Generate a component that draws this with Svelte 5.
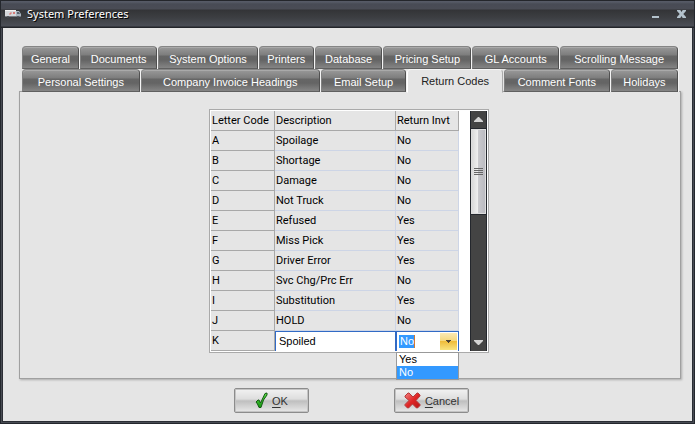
<script>
  const tabRows = [
    [
      { label: 'General', share: 57 },
      { label: 'Documents', share: 78 },
      { label: 'System Options', share: 101 },
      { label: 'Printers', share: 55 },
      { label: 'Database', share: 68 },
      { label: 'Pricing Setup', share: 89 },
      { label: 'GL Accounts', share: 88 },
      { label: 'Scrolling Message', share: 120 }
    ],
    [
      { label: 'Personal Settings', share: 119 },
      { label: 'Company Invoice Headings', share: 182 },
      { label: 'Email Setup', share: 86 },
      { label: 'Return Codes', share: 96 },
      { label: 'Comment Fonts', share: 107 },
      { label: 'Holidays', share: 67 }
    ]
  ];
  const codes = [
    ['A', 'Spoilage', 'No'],
    ['B', 'Shortage', 'No'],
    ['C', 'Damage', 'No'],
    ['D', 'Not Truck', 'No'],
    ['E', 'Refused', 'Yes'],
    ['F', 'Miss Pick', 'Yes'],
    ['G', 'Driver Error', 'Yes'],
    ['H', 'Svc Chg/Prc Err', 'No'],
    ['I', 'Substitution', 'Yes'],
    ['J', 'HOLD', 'No']
  ];
  let selected = $state('Return Codes');
  let description = $state('Spoiled');
  let returnInvt = $state('No');
</script>

<div class="window">
  <header>
    <svg class="truck" width="17" height="10" viewBox="0 0 17 10" aria-hidden="true">
      <path d="M0 1h11v6H0z" fill="#d5d7da" />
      <path d="M0 1h11v1H0z" fill="#f2f2f2" />
      <path d="M11 2h3l2 3v3h-5z" fill="#a9b4bf" />
      <path d="M12 3h2l1 2h-3z" fill="#59636f" />
      <path d="M4 5l2-2 1 1-2 2zM8 3h2v2H8z" fill="#d67a78" />
      <path d="M0 7h16v1H0z" fill="#767b82" />
      <circle cx="3" cy="8" r="1" fill="#4a4d52" />
      <circle cx="13" cy="8" r="1" fill="#4a4d52" />
    </svg>
    <h1>System Preferences</h1>
    <button class="win" aria-label="Minimize">
      <svg width="9" height="9" viewBox="0 0 9 9"><path d="M1 6h7v2H1z" fill="#b4c3cd" /></svg>
    </button>
    <button class="win" aria-label="Close">
      <svg width="9" height="8" viewBox="0 0 9 8"><path d="M0 0h3.3L4.5 2 5.7 0H9v1L6.3 4 9 7v1H5.7L4.5 6 3.3 8H0V7l2.7-3L0 1z" fill="#b4c3cd" /></svg>
    </button>
  </header>

  <main>
    <nav role="tablist">
      {#each tabRows as row}
        <div class="tabs">
          {#each row as tab}
            <button
              class="tab"
              class:active={tab.label === selected}
              role="tab"
              aria-selected={tab.label === selected}
              style:flex-grow={tab.share}
              onclick={() => (selected = tab.label)}>{tab.label}</button>
          {/each}
        </div>
      {/each}
    </nav>

    <section class="panel" role="tabpanel">
      <div class="grid">
        <table>
          <colgroup><col class="c1" /><col class="c2" /><col class="c3" /></colgroup>
          <thead>
            <tr><th>Letter Code</th><th>Description</th><th>Return Invt</th></tr>
          </thead>
          <tbody>
            {#each codes as [letter, text, ret]}
              <tr><th>{letter}</th><td>{text}</td><td>{ret}</td></tr>
            {/each}
            <tr class="editing">
              <th>K</th>
              <td><input aria-label="Description" bind:value={description} /></td>
              <td>
                <div class="combo">
                  <select aria-label="Return Invt" bind:value={returnInvt}>
                    <option>Yes</option>
                    <option>No</option>
                  </select>
                  <span class="drop" aria-hidden="true">
                    <svg width="5" height="3" viewBox="0 0 5 3"><path d="M0 0h5v1H4v1H3v1H2V2H1V1H0z" fill="#4b4236" /></svg>
                  </span>
                  <ul role="listbox" aria-label="Return Invt">
                    {#each ['Yes', 'No'] as option}
                      <li role="option" class:chosen={option === returnInvt} aria-selected={option === returnInvt}>{option}</li>
                    {/each}
                  </ul>
                </div>
              </td>
            </tr>
          </tbody>
        </table>
        <div class="scroll">
          <button aria-label="Scroll up">
            <svg width="9" height="5" viewBox="0 0 9 5"><path d="M4 0h1l4 4v1H0V4z" fill="#d4d4d4" /></svg>
          </button>
          <div class="track">
            <div class="thumb"><i></i><i></i><i></i><i></i></div>
          </div>
          <button aria-label="Scroll down">
            <svg width="9" height="5" viewBox="0 0 9 5"><path d="M0 0h9v1L5 5H4L0 1z" fill="#d4d4d4" /></svg>
          </button>
        </div>
      </div>
    </section>

    <footer>
      <button class="action">
        <svg width="13" height="17" viewBox="0 0 13 17" aria-hidden="true">
          <defs><linearGradient id="green" x2="0" y2="1"><stop stop-color="#5fe04a" /><stop offset="1" stop-color="#14960f" /></linearGradient></defs>
          <path d="M1 10l2-2h1l1.500 3L10 1.500 12 1v2L8.500 8 6 15.500H4L2.500 12z" fill="url(#green)" stroke="#135c12" />
        </svg>
        <span><u>O</u>K</span>
      </button>
      <button class="action">
        <svg width="17" height="17" viewBox="0 0 17 17" aria-hidden="true">
          <defs><linearGradient id="red" x2="1" y2="1"><stop stop-color="#f28080" /><stop offset="0.500" stop-color="#df2626" /><stop offset="1" stop-color="#b81717" /></linearGradient></defs>
          <path d="M1 4l3-3 1 0 4 4 4-4h1l2 2v1l-4 4.500 4 4v1l-2.500 2.500h-1L8.500 12l-4 4h-1L1 13.500v-1l4-4L1 5z" fill="url(#red)" stroke="#b33a3a" />
        </svg>
        <span><u>C</u>ancel</span>
      </button>
    </footer>
  </main>
</div>

<style>
  :global(body) {
    margin: 0;
  }
  * {
    box-sizing: border-box;
  }
  button,
  input,
  select {
    font: inherit;
    margin: 0;
    padding: 0;
    border: 0;
    border-radius: 0;
    outline: 0;
  }
  .window {
    min-height: 100vh;
    display: flex;
    flex-direction: column;
    padding: 0 3px 3px;
    background: #2b2e35;
    box-shadow: inset 0 0 0 1px #24272d, inset 0 0 0 2px #484b53;
    font-family: "Liberation Sans", Arial, sans-serif;
    font-size: 11px;
    color: #000;
  }
  header {
    display: flex;
    align-items: center;
    height: 28px;
    margin: 0 -2px;
    padding: 0 8px 0 4px;
    background: linear-gradient(#24262b 0 1px, #565a66 1px 2px, #484b55 4px, #4a4c55 9px, #333437 10px, #3d3f43 18px, #4b4e56 26px, #23252a 27px);
  }
  h1 {
    flex: 1;
    margin: 0 0 0 5px;
    font-family: "Noto Sans", sans-serif;
    font-size: 11px;
    font-weight: 400;
    line-height: 16px;
    color: #fff;
    text-shadow: 1px 1px 0 #000;
  }
  .win {
    display: flex;
    margin-left: 17px;
    background: none;
  }
  main {
    flex: 1;
    padding: 18px 11px 0 16px;
    background: #e5e5e5;
  }
  nav {
    padding: 0 2px 0 3px;
    position: relative;
  }
  .tabs {
    display: flex;
  }
  .tab {
    flex: 1 1 0;
    min-width: 0;
    height: 23px;
    padding-top: 2px;
    border: 1px solid #555;
    border-color: #858585 #505050 #606060 #808080;
    border-radius: 4px 4px 0 0;
    background: linear-gradient(#999 0, #7d7d7d 8px, #666 9px, #646464 13px, #858585 21px);
    box-shadow: inset 0 1px 0 #aaa, 1px 0 0 #f4f4f4;
    margin-right: 1px;
    color: #fff;
    white-space: nowrap;
  }
  .tab.active {
    height: 24px;
    margin-bottom: -1px;
    padding-top: 0;
    border-color: #f6f6f6 #aaa #e5e5e5 #fff;
    background: #e5e5e5;
    box-shadow: none;
    color: #222;
    position: relative;
  }
  .panel {
    display: flex;
    justify-content: center;
    align-items: flex-start;
    padding: 17px 2px 25px 0;
    border: 1px solid #a0a0a0;
    box-shadow: 1px 1px 2px #aaa;
    margin-top: -1px;
  }
  .grid {
    display: flex;
    padding: 1px;
    border: 1px solid #aaa;
    background: #fff;
  }
  table {
    width: 248px;
    table-layout: fixed;
    border-collapse: separate;
    border-spacing: 0;
    margin-right: 11px;
  }
  .c1 {
    width: 64px;
  }
  .c2 {
    width: 121px;
  }
  th,
  td {
    height: 20px;
    padding: 0 0 0 1px;
    border: solid #cdd5e6;
    border-width: 0 1px 1px 0;
    background: #e5e5e5;
    font-family: Roboto, sans-serif;
    font-weight: 400;
    line-height: 19px;
    text-align: left;
    white-space: nowrap;
  }
  th {
    border-color: #a8a8a8;
  }
  .editing td {
    padding: 0;
    border: 0;
  }
  input {
    display: block;
    width: 100%;
    height: 20px;
    padding: 0 3px 1px;
    border: solid #316ac5;
    border-width: 1px 1px 0;
    background: #fff;
    font-family: "Liberation Sans", Arial, sans-serif;
  }
  .combo {
    position: relative;
    height: 20px;
    font-family: "Liberation Sans", Arial, sans-serif;
  }
  select {
    display: block;
    width: 100%;
    height: 20px;
    padding: 0 0 0 3px;
    appearance: none;
    border: solid #316ac5;
    border-width: 1px 1px 0;
    background: linear-gradient(90deg, #39f 15px, #d07830 15px) 2px 3px / 16px 13px no-repeat #fff;
    color: #fff;
  }
  option {
    color: #000;
  }
  .drop {
    position: absolute;
    right: 2px;
    top: 2px;
    display: flex;
    align-items: center;
    justify-content: center;
    width: 17px;
    height: 17px;
    background: linear-gradient(#fbe9b5, #f6d87e 45%, #efbd3b 50%, #f9e47f);
    pointer-events: none;
  }
  ul {
    position: absolute;
    top: 21px;
    left: 0;
    right: 0;
    margin: 0;
    padding: 0;
    border: 1px solid #999;
    background: #fff;
    list-style: none;
    line-height: 13px;
  }
  li {
    padding-left: 2px;
  }
  .chosen {
    background: #39f;
    color: #fff;
  }
  .scroll {
    display: flex;
    flex-direction: column;
    width: 17px;
    background: #444;
    border: solid #24272d;
    border-width: 0 1px;
  }
  .scroll button {
    display: flex;
    align-items: center;
    justify-content: center;
    height: 17px;
    background: #444;
  }
  .track {
    flex: 1;
  }
  .thumb {
    display: flex;
    flex-direction: column;
    align-items: center;
    justify-content: center;
    gap: 1px;
    height: 87px;
    border: solid #24272d;
    border-width: 1px 0;
    background: linear-gradient(90deg, #d5d5d5, #efefef 45%, #c9c9cd 50%, #b9b9bf);
    box-shadow: inset 0 0 0 1px #ddd;
  }
  .thumb i {
    width: 9px;
    height: 1px;
    background: #666;
  }
  footer {
    display: flex;
    justify-content: center;
    gap: 85px;
    padding: 9px 0 8px 3px;
  }
  .action {
    display: flex;
    align-items: center;
    justify-content: center;
    gap: 4px;
    width: 75px;
    height: 25px;
    border: 1px solid #8c8c8c;
    border-radius: 2px;
    background: linear-gradient(#f2f2f2, #dedede 10px, #bfbfbf 12px, #e8e8e8);
    box-shadow: inset 0 0 0 1px #c4c4c4;
    color: #333;
  }
  u {
    text-underline-offset: 2px;
  }
</style>
